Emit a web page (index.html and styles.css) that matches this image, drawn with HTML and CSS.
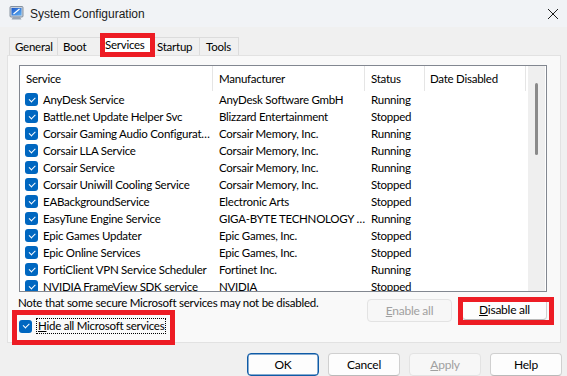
FILE: index.html
```html
<!DOCTYPE html>
<html>

<head>
    <meta charset="utf-8">
    <title>System Configuration</title>
    <link rel="stylesheet" href="styles.css">
</head>

<body>
    <div class="titlebar">
        <svg class="appicon" width="16" height="16" viewBox="0 0 16 16">
            <defs>
                <linearGradient id="scr" x1="0" y1="0" x2="1" y2="1">
                    <stop offset="0" stop-color="#1b56c9"/>
                    <stop offset="1" stop-color="#5fb0f2"/>
                </linearGradient>
            </defs>
            <rect x="1" y="1.5" width="13" height="10.5" rx="1" fill="#c9d1dc" stroke="#6f7c8e" stroke-width="0.8"/>
            <rect x="2.5" y="3" width="10" height="7.5" fill="url(#scr)"/>
            <path d="M4.5 9 L10.5 4" stroke="#fff" stroke-width="1.1"/>
            <path d="M4 12 L11 12 L12.5 14.5 L2.5 14.5 Z" fill="#9aa6b5"/>
        </svg>
        <span class="title">System Configuration</span>
        <svg class="close" width="12" height="12" viewBox="0 0 12 12">
            <path d="M1 1 L11 11 M11 1 L1 11" stroke="#1c1c1c" stroke-width="1"/>
        </svg>
    </div>

    <div class="tabs">
        <div class="tab">General</div>
        <div class="tab">Boot</div>
        <div class="tab tab-on">Services</div>
        <div class="tab tab-after">Startup</div>
        <div class="tab">Tools</div>
    </div>

    <div class="panel">
        <div class="listbox">
            <div class="table">
                <div class="row head">
                    <div class="cell c1">Service</div>
                    <div class="cell c2">Manufacturer</div>
                    <div class="cell c3">Status</div>
                    <div class="cell c4">Date Disabled</div>
                </div>
                <div class="row"><div class="cell c1"><span class="cb"></span>AnyDesk Service</div><div class="cell c2">AnyDesk Software GmbH</div><div class="cell c3">Running</div><div class="cell c4"></div></div>
                <div class="row"><div class="cell c1"><span class="cb"></span>Battle.net Update Helper Svc</div><div class="cell c2">Blizzard Entertainment</div><div class="cell c3">Stopped</div><div class="cell c4"></div></div>
                <div class="row"><div class="cell c1"><span class="cb"></span>Corsair Gaming Audio Configurat…</div><div class="cell c2">Corsair Memory, Inc.</div><div class="cell c3">Running</div><div class="cell c4"></div></div>
                <div class="row"><div class="cell c1"><span class="cb"></span>Corsair LLA Service</div><div class="cell c2">Corsair Memory, Inc.</div><div class="cell c3">Running</div><div class="cell c4"></div></div>
                <div class="row"><div class="cell c1"><span class="cb"></span>Corsair Service</div><div class="cell c2">Corsair Memory, Inc.</div><div class="cell c3">Running</div><div class="cell c4"></div></div>
                <div class="row"><div class="cell c1"><span class="cb"></span>Corsair Uniwill Cooling Service</div><div class="cell c2">Corsair Memory, Inc.</div><div class="cell c3">Stopped</div><div class="cell c4"></div></div>
                <div class="row"><div class="cell c1"><span class="cb"></span>EABackgroundService</div><div class="cell c2">Electronic Arts</div><div class="cell c3">Stopped</div><div class="cell c4"></div></div>
                <div class="row"><div class="cell c1"><span class="cb"></span>EasyTune Engine Service</div><div class="cell c2">GIGA-BYTE TECHNOLOGY …</div><div class="cell c3">Running</div><div class="cell c4"></div></div>
                <div class="row"><div class="cell c1"><span class="cb"></span>Epic Games Updater</div><div class="cell c2">Epic Games, Inc.</div><div class="cell c3">Stopped</div><div class="cell c4"></div></div>
                <div class="row"><div class="cell c1"><span class="cb"></span>Epic Online Services</div><div class="cell c2">Epic Games, Inc.</div><div class="cell c3">Stopped</div><div class="cell c4"></div></div>
                <div class="row"><div class="cell c1"><span class="cb"></span>FortiClient VPN Service Scheduler</div><div class="cell c2">Fortinet Inc.</div><div class="cell c3">Running</div><div class="cell c4"></div></div>
                <div class="row"><div class="cell c1"><span class="cb"></span>NVIDIA FrameView SDK service</div><div class="cell c2">NVIDIA</div><div class="cell c3">Stopped</div><div class="cell c4"></div></div>
            </div>
            <div class="vscroll"><div class="thumb"></div></div>
        </div>

        <div class="footer">
            <div class="note">Note that some secure Microsoft services may not be disabled.</div>
            <div class="actions">
                <button class="btn btn-off"><u>E</u>nable all</button>
                <span class="mark mark-btn"><button class="btn"><u>D</u>isable all</button></span>
            </div>
            <div class="hide">
                <span class="mark mark-hide">
                    <span class="cb"></span><span class="focus"><u>H</u>ide all Microsoft services</span>
                </span>
            </div>
        </div>
    </div>

    <div class="dialog-buttons">
        <button class="btn btn-default">OK</button>
        <button class="btn">Cancel</button>
        <button class="btn btn-off"><u>A</u>pply</button>
        <button class="btn">Help</button>
    </div>
</body>

</html>
```

FILE: styles.css
```css
html, body {
    margin: 0;
    padding: 0;
}

body {
    width: 567px;
    height: 376px;
    overflow: hidden;
    background: #f0f0f0;
    font-family: Lato, "Liberation Sans", sans-serif;
    font-size: 11.5px;
    letter-spacing: -0.25px;
    color: #000;
}

/* title bar */
.titlebar {
    height: 27px;
    display: flex;
    align-items: center;
    background: #f1f3f6;
}

.appicon {
    margin-left: 9px;
    margin-top: -1px;
}

.title {
    margin-left: 5px;
    font-family: "Liberation Sans", sans-serif;
    font-size: 12px;
    letter-spacing: 0;
    color: #1a1a1a;
}

.close {
    margin-left: auto;
    margin-right: 8px;
}

/* tabs */
.tabs {
    display: flex;
    align-items: flex-end;
    height: 28px;
    margin-left: 9px;
}

.tab {
    height: 18px;
    line-height: 17px;
    padding: 0 5px;
    background: #f0f0f0;
    border: 1px solid #dcdcdc;
    border-bottom: none;
    border-right: none;
    box-sizing: border-box;
}

.tab:nth-child(1) { width: 48px; }
.tab:nth-child(2) { width: 43px; }
.tab:nth-child(5) { width: 40px; padding-left: 6px; border-right: 1px solid #dcdcdc; }

.tab-on {
    position: relative;
    z-index: 1;
    width: 55px;
    height: 24px;
    line-height: 13px;
    margin-bottom: -2px;
    padding: 0;
    background: #fff;
    border: 5px solid #ed1c24;
}

.tab-after {
    width: 44px;
    padding-left: 2px;
    border-left: none;
}

/* tab page */
.panel {
    margin: 0 6px 0 7px;
    height: 288px;
    box-sizing: border-box;
    padding: 9px 13px 0 11px;
    background: #f9f9f9;
    border: 1px solid #e2e2e2;
}

.listbox {
    display: flex;
    height: 227px;
    box-sizing: border-box;
    border: 1px solid #828790;
    background: #fff;
}

.table {
    width: 508px;
    overflow: hidden;
}

.row {
    display: flex;
    height: 17px;
    align-items: center;
    white-space: nowrap;
}

.row.head {
    height: 25px;
    align-items: stretch;
}

.cell {
    box-sizing: border-box;
    padding-left: 6px;
    overflow: hidden;
    display: flex;
    align-items: center;
}

.head .cell {
    border-right: 1px solid #e5e5e5;
}

.c1 { width: 193px; }
.c2 { width: 152px; }
.c3 { width: 60px; }
.c4 { width: 101px; }

.row .c1 { padding-left: 5px; }
.head .c1 { padding-left: 6px; }
.head .c4 { padding-left: 5px; }

.cb {
    flex: none;
    display: inline-flex;
    align-items: center;
    justify-content: center;
    width: 13px;
    height: 13px;
    margin-right: 5px;
    border-radius: 3px;
    background: #0067c0;
}

.cb::after {
    content: "";
    width: 5px;
    height: 2.5px;
    margin-top: -2px;
    border-left: 1.2px solid #fff;
    border-bottom: 1.2px solid #fff;
    transform: rotate(-45deg);
}

.vscroll {
    width: 17px;
    background: #efefef;
    display: flex;
    justify-content: center;
}

.thumb {
    width: 3px;
    height: 72px;
    margin-top: 17px;
    border-radius: 2px;
    background: #8a8a8a;
}

/* bottom of the tab page */
.footer {
    display: grid;
    grid-template-columns: 1fr auto;
    margin-top: 7px;
}

.note {
    align-self: start;
    margin-top: -4px;
    margin-left: -1px;
    line-height: 16px;
}

.actions {
    display: flex;
    align-items: flex-start;
    gap: 6px;
}

.hide {
    grid-column: 1 / 3;
    display: flex;
    margin-top: -12px;
}

.mark {
    display: inline-flex;
    align-items: center;
    border: 5px solid #ed1c24;
}

.mark-hide {
    margin-left: -7px;
    padding: 4px 5px 7px 2px;
}

.mark-btn {
    width: 96px;
    height: 28px;
    box-sizing: border-box;
    overflow: hidden;
    align-items: flex-start;
    margin: -2px -7px -3px 0;
}

.mark-btn .btn {
    flex: none;
    width: 85px;
    height: 21px;
    margin: -3px 0 0 -1px;
}

.focus {
    outline: 1px dotted #000;
    padding: 0 1px;
    line-height: 14px;
}

.btn {
    width: 85px;
    height: 23px;
    box-sizing: border-box;
    font-family: inherit;
    font-size: 12px;
    letter-spacing: inherit;
    color: #000;
    background: #fdfdfd;
    border: 1px solid #d0d0d0;
    border-bottom-color: #bababa;
    border-radius: 4px;
    padding: 0;
}

.btn-off {
    color: #a0a0a0;
    background: #f7f7f7;
    border-color: #e3e3e3;
}

.btn-default {
    border: 1px solid #0f5ba6;
    box-shadow: inset 0 0 0 0.5px #0f5ba6;
}

.dialog-buttons {
    display: flex;
    justify-content: flex-end;
    gap: 9px;
    margin-top: 10px;
    margin-right: 5px;
}

.dialog-buttons .btn {
    width: 72px;
}
```
